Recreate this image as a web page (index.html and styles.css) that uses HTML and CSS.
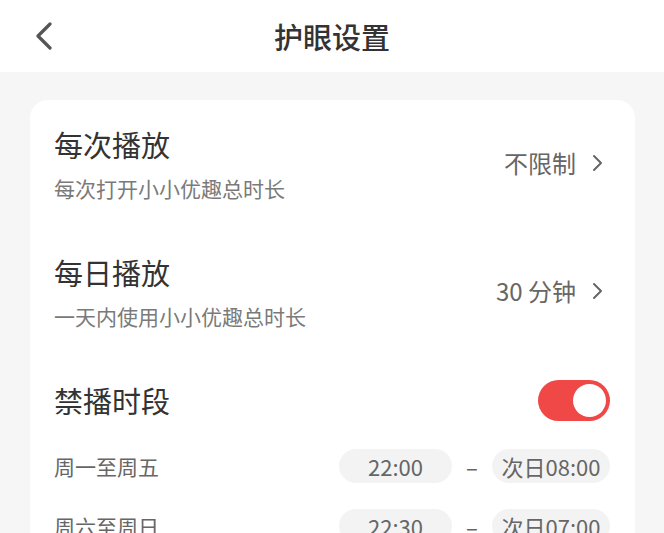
FILE: index.html
```html
<!DOCTYPE html>
<html lang="zh">
<head>
<meta charset="utf-8">
<title>护眼设置</title>
<link rel="stylesheet" href="styles.css">
</head>
<body>
<div class="page">
  <header class="topbar">
    <span class="back">
      <svg width="18" height="28" viewBox="0 0 18 28"><path d="M15 2 L3 14 L15 26" fill="none" stroke="#555" stroke-width="3.2" stroke-linecap="round" stroke-linejoin="round"/></svg>
    </span>
    <h1 class="title">护眼设置</h1>
  </header>
  <main class="content">
    <section class="card">
      <div class="row">
        <div class="text">
          <div class="row-title">每次播放</div>
          <div class="row-sub">每次打开小小优趣总时长</div>
        </div>
        <div class="value">不限制<svg class="chev" width="12" height="18" viewBox="0 0 12 18"><path d="M2 2 L9 9 L2 16" fill="none" stroke="#666" stroke-width="2" stroke-linecap="round" stroke-linejoin="round"/></svg></div>
      </div>
      <div class="row">
        <div class="text">
          <div class="row-title">每日播放</div>
          <div class="row-sub">一天内使用小小优趣总时长</div>
        </div>
        <div class="value">30 分钟<svg class="chev" width="12" height="18" viewBox="0 0 12 18"><path d="M2 2 L9 9 L2 16" fill="none" stroke="#666" stroke-width="2" stroke-linecap="round" stroke-linejoin="round"/></svg></div>
      </div>
      <div class="row-switch">
        <div class="row-title">禁播时段</div>
        <span class="toggle"><span class="knob"></span></span>
      </div>
      <div class="sched">
        <span class="day">周一至周五</span>
        <span class="times"><span class="pill p1">22:00</span><span class="dash">–</span><span class="pill p2">次日08:00</span></span>
      </div>
      <div class="sched">
        <span class="day">周六至周日</span>
        <span class="times"><span class="pill p1">22:30</span><span class="dash">–</span><span class="pill p2">次日07:00</span></span>
      </div>
    </section>
  </main>
</div>
</body>
</html>
```
FILE: styles.css
```css
* { box-sizing: border-box; margin: 0; padding: 0; }
html, body { width: 664px; height: 533px; overflow: hidden; }
body {
  background: #f6f6f6;
  font-family: "Noto Sans CJK SC", "Noto Sans", sans-serif;
  color: #333;
}
.page { display: flex; flex-direction: column; }
.topbar {
  height: 72px;
  background: #fff;
  display: flex;
  align-items: center;
  justify-content: center;
  position: relative;
}
.back {
  position: absolute;
  left: 35px;
  top: 22px;
  display: flex;
}
.title {
  font-size: 29px;
  font-weight: 500;
  color: #333;
  line-height: 40px;
}
.content { padding: 28px 29px 0 30px; }
.card {
  background: #fff;
  border-radius: 18px;
  padding: 24px 25px 0 24px;
  height: 600px;
}
.row {
  display: flex;
  align-items: flex-start;
  justify-content: space-between;
  height: 128px;
}
.text { display: flex; flex-direction: column; gap: 9px; }
.row-title { font-size: 29px; line-height: 40px; color: #333; }
.row-sub { font-size: 21px; line-height: 30px; color: #7a7a7a; }
.value {
  height: 79px;
  display: flex;
  align-items: center;
  font-size: 24px;
  color: #666;
  padding-right: 6px;
  padding-bottom: 3px;
  white-space: pre;
}
.chev { margin-left: 16px; margin-top: 2px; }
.row-switch {
  display: flex;
  align-items: center;
  justify-content: space-between;
  height: 40px;
  margin-bottom: 16px;
}
.toggle {
  width: 72px;
  height: 41px;
  border-radius: 21px;
  background: #f04747;
  display: flex;
  align-items: center;
  justify-content: flex-end;
  padding-right: 4px;
}
.knob {
  width: 33px;
  height: 33px;
  border-radius: 50%;
  background: #fff;
}
.sched {
  display: flex;
  align-items: center;
  justify-content: space-between;
  height: 60px;
}
.day { font-size: 21px; color: #666; }
.times { display: flex; align-items: center; }
.pill {
  height: 34px;
  border-radius: 17px;
  background: #f3f3f3;
  font-size: 22px;
  color: #666;
  display: flex;
  align-items: center;
  justify-content: center;
}
.p1 { width: 113px; }
.p2 { width: 118px; }
.dash { width: 40px; text-align: center; font-size: 22px; color: #666; }
```
